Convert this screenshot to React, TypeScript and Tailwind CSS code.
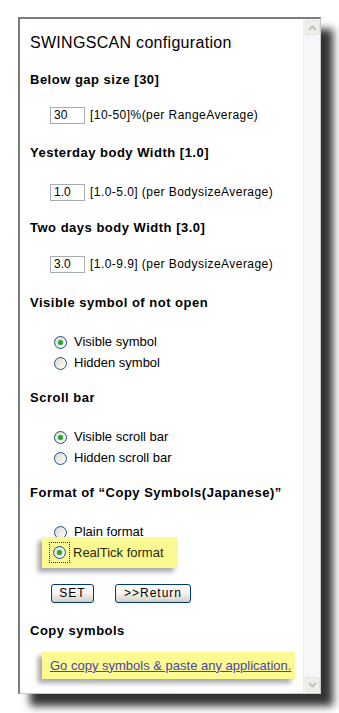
import React from "react";

const font = { fontFamily: '"Liberation Sans", Arial, sans-serif' };

function Radio({ checked }: { checked?: boolean }) {
  return (
    <span className="w-[13px] h-[13px] rounded-full border border-[#1c5180] bg-gradient-to-br from-[#dcd9cf] to-white flex items-center justify-center shrink-0">
      {checked && <span className="w-[5px] h-[5px] rounded-full bg-[#2fa52f] shadow-[0_0_1px_#7cd27c]" />}
    </span>
  );
}

function Heading({ children, className = "" }: { children: React.ReactNode; className?: string }) {
  return <div className={`h-[16px] leading-[16px] text-[13px] font-bold tracking-[0.5px] text-black whitespace-nowrap ${className}`}>{children}</div>;
}

function InputRow({ value, hint, className = "" }: { value: string; hint: string; className?: string }) {
  return (
    <div className={`h-[18px] flex items-center pl-[20px] ${className}`}>
      <div className="w-[35px] h-[17px] border border-[#a5acb5] bg-white text-[12px] leading-[15px] pl-[3px] text-black">{value}</div>
      <span className="ml-[5px] text-[12px] tracking-[0.45px] text-black whitespace-nowrap">{hint}</span>
    </div>
  );
}

function RadioRow({ label, checked, className = "" }: { label: string; checked?: boolean; className?: string }) {
  return (
    <div className={`h-[16px] flex items-center pl-[24px] gap-[7px] text-[13px] text-black ${className}`}>
      <Radio checked={checked} />
      <span className="whitespace-nowrap">{label}</span>
    </div>
  );
}

function XpButton({ children, w }: { children: React.ReactNode; w: string }) {
  return (
    <button
      className={`${w} h-[19px] rounded-[3px] border border-[#003c74] bg-gradient-to-b from-white via-[#f3f3ef] to-[#d6d0c5] text-[12px] leading-[17px] text-black tracking-[1px] shadow-[inset_0_-1px_0_#c1ccd9]`}
    >
      {children}
    </button>
  );
}

export default function App() {
  return (
    <div className="w-[339px] h-[713px] bg-white overflow-hidden pt-[17px] pl-[18px]" style={font}>
      <div className="w-[303px] h-[677px] flex bg-white border-l-2 border-t-2 border-[#7c7c7c] border-r border-b border-r-[#c8c8c8] border-b-[#c8c8c8] shadow-[12px_12px_8px_rgba(0,0,0,0.8)]">
        {/* content */}
        <div className="flex-1 pl-[10px] pt-[16px]">
          <div className="h-[16px] leading-[16px] text-[16px] tracking-[0.3px] text-black whitespace-nowrap">SWINGSCAN configuration</div>

          <Heading className="mt-[21px]">Below gap size [30]</Heading>
          <InputRow className="mt-[18px]" value="30" hint="[10-50]%(per RangeAverage)" />

          <Heading className="mt-[21px]">Yesterday body Width [1.0]</Heading>
          <InputRow className="mt-[22px]" value="1.0" hint="[1.0-5.0] (per BodysizeAverage)" />

          <Heading className="mt-[19px]">Two days body Width [3.0]</Heading>
          <InputRow className="mt-[19px]" value="3.0" hint="[1.0-9.9] (per BodysizeAverage)" />

          <Heading className="mt-[22px]">Visible symbol of not open</Heading>
          <RadioRow className="mt-[23px]" label="Visible symbol" checked />
          <RadioRow className="mt-[5px]" label="Hidden symbol" />

          <Heading className="mt-[19px]">Scroll bar</Heading>
          <RadioRow className="mt-[23px]" label="Visible scroll bar" checked />
          <RadioRow className="mt-[5px]" label="Hidden scroll bar" />

          <Heading className="mt-[19px]">Format of “Copy Symbols(Japanese)”</Heading>
          <RadioRow className="mt-[23px]" label="Plain format" />
          <div className="relative mt-[-3px] ml-[12px] w-[136px] h-[31px] bg-[#fbf992] shadow-[-4px_4px_5px_rgba(0,0,0,0.35)] flex items-center pl-[7px] gap-[3px] text-[13px] text-[#2a2a10]">
            <span className="border border-dotted border-[#333] p-[3px]">
              <Radio checked />
            </span>
            <span className="whitespace-nowrap">RealTick format</span>
          </div>

          <div className="mt-[16px] flex items-center pl-[21px] gap-[21px]">
            <XpButton w="w-[43px]">SET</XpButton>
            <XpButton w="w-[76px]">&gt;&gt;Return</XpButton>
          </div>

          <Heading className="mt-[20px]">Copy symbols</Heading>
          <div className="mt-[13px] ml-[12px] w-[253px] h-[27px] bg-[#fbf992] shadow-[-4px_4px_5px_rgba(0,0,0,0.35)] flex items-center pl-[8px]">
            <span className="text-[13px] text-[#4f45a0] underline whitespace-nowrap">Go copy symbols &amp; paste any application.</span>
          </div>
        </div>

        {/* scrollbar */}
        <div className="w-[17px] h-full bg-[#f7f7fa] border-l border-[#ececf0] flex flex-col justify-between py-[1px] items-center">
          <div className="w-[15px] h-[15px] rounded-[2px] border border-[#e3e2dc] bg-[#efeee8] flex items-center justify-center">
            <svg width="9" height="6" viewBox="0 0 9 6"><path d="M1 5 L4.5 1.5 L8 5" stroke="#c4c2b8" strokeWidth="2" fill="none" /></svg>
          </div>
          <div className="w-[15px] h-[15px] rounded-[2px] border border-[#e3e2dc] bg-[#efeee8] flex items-center justify-center">
            <svg width="9" height="6" viewBox="0 0 9 6"><path d="M1 1 L4.5 4.5 L8 1" stroke="#c4c2b8" strokeWidth="2" fill="none" /></svg>
          </div>
        </div>
      </div>
    </div>
  );
}
